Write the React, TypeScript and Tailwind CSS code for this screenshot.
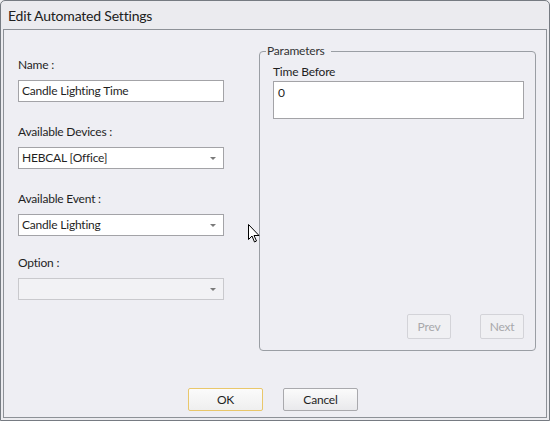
import React from 'react';

function Caret() {
  return (
    <svg width="6" height="3" viewBox="0 0 6 3" className="shrink-0">
      <path d="M0 0h6L3 3z" fill="#7a7a7a" />
    </svg>
  );
}

function Select({ value, disabled }: { value?: string; disabled?: boolean }) {
  return (
    <div
      className={`h-[22px] flex items-center justify-between pl-[3px] pr-[7px] border ${
        disabled ? 'bg-[#f2f2f5] border-[#c9c9cd]' : 'bg-white border-[#a3a3a7]'
      }`}
    >
      <span>{value}</span>
      <Caret />
    </div>
  );
}

function Field({ label, children, gap }: { label: string; children: React.ReactNode; gap: string }) {
  return (
    <div className={gap}>
      <div className="h-[16px] leading-[16px] mb-[7px]">{label}</div>
      {children}
    </div>
  );
}

export default function App() {
  return (
    <div className="w-[550px] h-[421px] font-['Lato',sans-serif] text-[12px] tracking-[-0.2px] text-[#1f1f1f] bg-[#f0f0f3]">
      <div className="relative w-full h-full flex flex-col border border-[#767b82] rounded-t-[5px] bg-[#ebebef]">
        {/* Title bar */}
        <div className="h-[28px] pl-[7px] flex items-center text-[14px] text-[#202020]">Edit Automated Settings</div>

        {/* Body */}
        <div className="flex-1 mx-[2px] mb-[2px] border border-[#8d9197] bg-[#eeeef3] flex flex-col">
          <div className="flex pl-[14px] h-[322px]">
            <div className="w-[206px] pt-[27px]">
              <Field label="Name :" gap="">
                <div className="h-[22px] flex items-center pl-[3px] bg-white border border-[#a3a3a7]">Candle Lighting Time</div>
              </Field>
              <Field label="Available Devices :" gap="mt-[22px]">
                <Select value="HEBCAL [Office]" />
              </Field>
              <Field label="Available Event :" gap="mt-[22px]">
                <Select value="Candle Lighting" />
              </Field>
              <Field label="Option :" gap="mt-[19px]">
                <Select disabled />
              </Field>
            </div>

            <fieldset className="ml-[35px] mt-[13px] w-[277px] h-[308px] border border-[#9a9ea4] rounded-[4px] pl-[13px] pr-[11px] pb-[11px] flex flex-col">
              <legend className="ml-[-7px] pl-[1px] pr-[6px] leading-[16px] text-[#333]">Parameters</legend>
              <div className="h-[16px] leading-[16px] mt-[5px]">Time Before</div>
              <div className="h-[38px] mt-[1px] bg-white border border-[#a3a3a7] pl-[4px] pt-[2px]">0</div>
              <div className="mt-auto flex justify-end gap-[29px]">
                <div className="w-[44px] h-[25px] flex items-center justify-center bg-[#f0f0f3] border border-[#d3d3d8] rounded-[2px] text-[#a8a8ab]">Prev</div>
                <div className="w-[44px] h-[25px] flex items-center justify-center bg-[#f0f0f3] border border-[#d3d3d8] rounded-[2px] text-[#a8a8ab]">Next</div>
              </div>
            </fieldset>
          </div>

          <div className="flex-1 flex justify-center items-start pt-[36px] pr-[4px] gap-[20px]">
            <div className="w-[75px] h-[23px] flex items-center justify-center rounded-[2px] border border-[#e9c76b] bg-gradient-to-b from-[#fbfbfb] to-[#efefef]">OK</div>
            <div className="w-[75px] h-[23px] flex items-center justify-center rounded-[2px] border border-[#a9a9ad] bg-gradient-to-b from-[#fbfbfb] to-[#e9e9ec]">Cancel</div>
          </div>
        </div>

        {/* Mouse pointer */}
        <svg className="absolute left-[247px] top-[223px]" width="12" height="19" viewBox="0 0 12 19">
          <path d="M0.5 0.5v15l3.5-3.5 2.5 6 2-1-2.5-5.5h5z" fill="#fff" stroke="#000" strokeWidth="1" strokeLinejoin="miter" />
        </svg>
      </div>
    </div>
  );
}
